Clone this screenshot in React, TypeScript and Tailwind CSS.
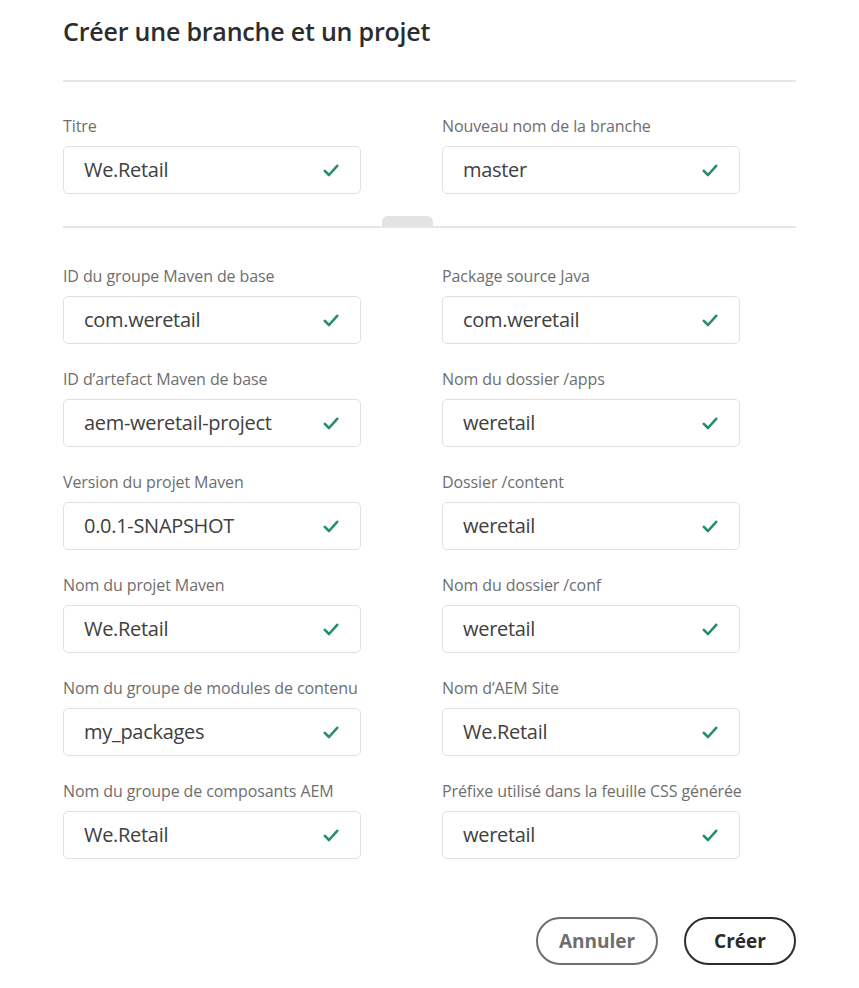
const font = { fontFamily: '"Open Sans", Lato, sans-serif' };

const rows: [string, string, string, string][] = [
  ['ID du groupe Maven de base', 'com.weretail', 'Package source Java', 'com.weretail'],
  ['ID d’artefact Maven de base', 'aem-weretail-project', 'Nom du dossier /apps', 'weretail'],
  ['Version du projet Maven', '0.0.1-SNAPSHOT', 'Dossier /content', 'weretail'],
  ['Nom du projet Maven', 'We.Retail', 'Nom du dossier /conf', 'weretail'],
  ['Nom du groupe de modules de contenu', 'my_packages', 'Nom d’AEM Site', 'We.Retail'],
  ['Nom du groupe de composants AEM', 'We.Retail', 'Préfixe utilisé dans la feuille CSS générée', 'weretail'],
];

function Check() {
  return (
    <svg width="16" height="13" viewBox="0 0 16 13" className="shrink-0">
      <path d="M1.8 6.8 L6 11 L14.2 1.8" fill="none" stroke="#268e6c" strokeWidth="2.6" strokeLinecap="round" strokeLinejoin="round" />
    </svg>
  );
}

function Field({ label, value }: { label: string; value: string }) {
  return (
    <div className="flex flex-col">
      <div className="text-[16px] leading-[20px] text-[#6e6e6e] whitespace-nowrap tracking-[-0.1px]">{label}</div>
      <div className="mt-[10px] h-[48px] flex items-center justify-between pl-[20px] pr-[21px] border border-[#e1e1e1] rounded-[5px] bg-white">
        <span className="text-[20px] text-[#404040] tracking-[-0.3px]">{value}</span>
        <Check />
      </div>
    </div>
  );
}

export default function App() {
  return (
    <div className="w-[859px] h-[988px] bg-white px-[63px] overflow-hidden" style={font}>
      <h1 className="pt-[15px] text-[25px] leading-[32px] font-semibold text-[#2c2c2c] tracking-[-0.2px]">Créer une branche et un projet</h1>
      <div className="mt-[33px] h-[2px] bg-[#e6e6e6]" />

      <div className="mt-[34px] grid grid-cols-[298px_298px] gap-x-[81px]">
        <Field label="Titre" value="We.Retail" />
        <Field label="Nouveau nom de la branche" value="master" />
      </div>

      <div className="relative mt-[32px] h-[2px] bg-[#e6e6e6]">
        <div className="absolute left-[319px] bottom-[2px] w-[51px] h-[10px] rounded-t-[6px] bg-[#e3e3e3]" />
      </div>

      <div className="mt-[38px] grid grid-cols-[298px_298px] gap-x-[81px] gap-y-[25px]">
        {rows.map(([l1, v1, l2, v2]) => (
          <>
            <Field key={l1} label={l1} value={v1} />
            <Field key={l2} label={l2} value={v2} />
          </>
        ))}
      </div>

      <div className="mt-[58px] flex justify-end gap-[26px]">
        <button className="h-[48px] w-[122px] rounded-full border-2 border-[#6e6e6e] text-[19px] font-bold text-[#6e6e6e]">Annuler</button>
        <button className="h-[48px] w-[112px] rounded-full border-2 border-[#2c2c2c] text-[19px] font-bold text-[#2c2c2c]">Créer</button>
      </div>
    </div>
  );
}
